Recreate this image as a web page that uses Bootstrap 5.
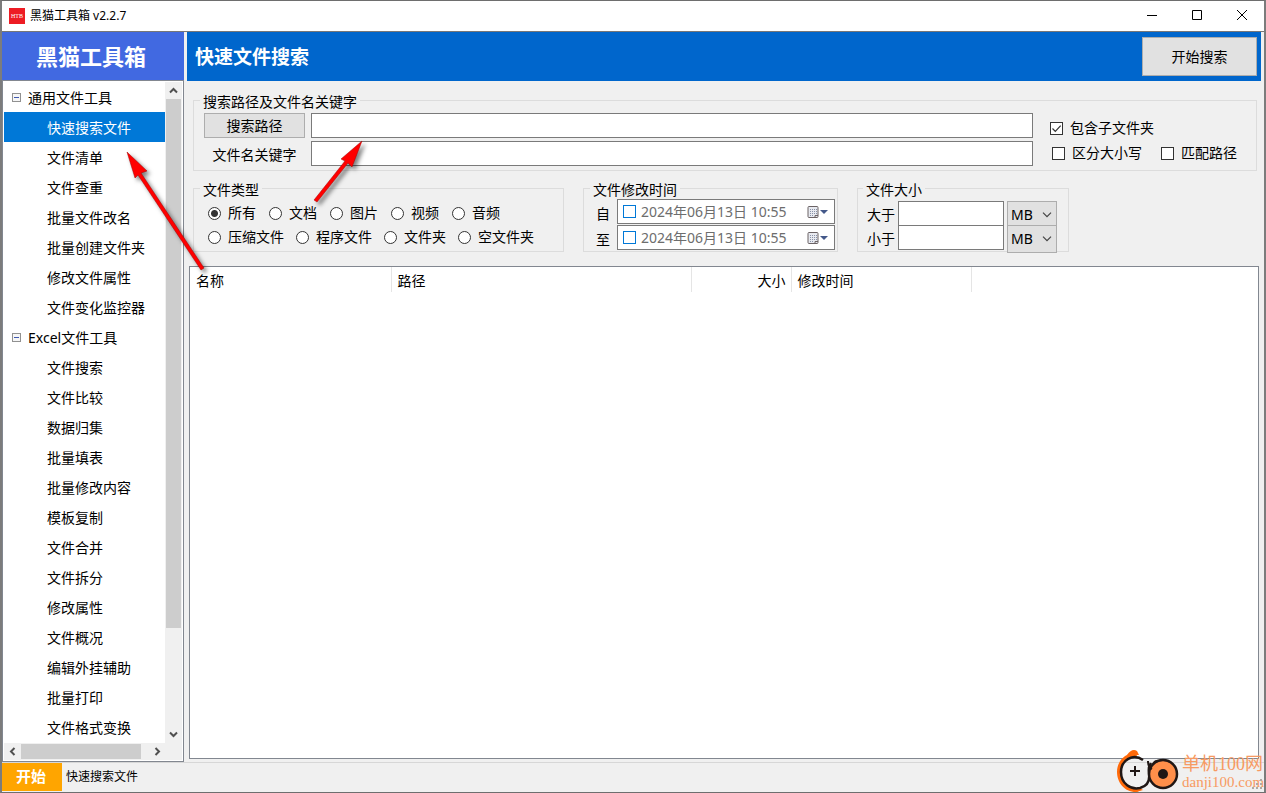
<!DOCTYPE html>
<html lang="zh-CN">
<head>
<meta charset="utf-8">
<meta name="viewport" content="width=device-width, initial-scale=1">
<title>黑猫工具箱 v2.2.7</title>
<link href="https://cdn.jsdelivr.net/npm/bootstrap@5.3.0/dist/css/bootstrap.min.css" rel="stylesheet">
<style>
  body { font: 14px/20px "Noto Sans", "Noto Sans CJK SC", sans-serif; color: #000; background: #f0f0f0; }
  .app { border: 1px solid #6e6e6e; border-left: 2px solid #7c7c7c; border-right: 2px solid #7c7c7c; }
  .shrinkable { min-width: 0; min-height: 0; }
  .titlebar { height: 31px; background: #fff; border-bottom: 1px solid #777; font-size: 12px; padding-left: 7px; }
  .app-logo { width: 16px; height: 16px; background: #ed1c24; margin-right: 5px; }
  .winbtn { width: 45px; height: 30px; border: 0; background: none; padding: 0 0 2px; display: flex; align-items: center; justify-content: center; }
  .sidebar { width: 182px; }
  .brand { height: 48px; background: #4169e1; color: #fff; font-size: 22px; font-weight: 700; padding: 0 4px 0 0; }
  .tree-frame { border: 1px solid #828790; background: #fff; padding: 1px; }
  .tree-view { overflow: hidden; }
  .tree-view a { display: flex; align-items: center; height: 30px; color: #000; text-decoration: none; padding: 1px 0 0 43px; white-space: nowrap; }
  .tree-view a.group-node { padding-left: 8px; gap: 7px; }
  .tree-view a.active { background: #0078d7; color: #fff; }
  .vbar { width: 17px; background: #f0f0f0; }
  .hbar { height: 17px; background: #f0f0f0; }
  .thumb { background: #cdcdcd; }
  .vbar .thumb { width: 15px; height: 80%; }
  .hbar .thumb { width: 120px; height: 15px; margin-left: 1px; }
  .arrow-btn { width: 16px; height: 17px; border: 0; padding: 0; background: none; display: flex; align-items: center; justify-content: center; flex: none; }
  .content { padding: 0 3px 3px; }
  .page-head { height: 49px; background: #06c; color: #fff; padding: 4px 4px 4px 8px; }
  .page-head h1 { font-size: 19px; line-height: 26px; font-weight: 700; margin: 0; }
  .winform-btn { background: #e1e1e1; border: 1px solid #adadad; color: #000; padding: 0; }
  .start-btn { width: 115px; height: 39px; }
  .groupbox { border: 1px solid #dcdcdc; padding: 0 10px; margin: 0; min-width: 0; }
  .groupbox legend { float: none; width: auto; font-size: 14px; line-height: 20px; margin: 0 0 0 -4px; padding: 4px 3px 0; height: 24px; }
  .box-path { margin: 7px 4px 0 6px; height: 83px; }
  .filters { gap: 19px; margin: 5px 0 0 6px; }
  .filters .groupbox { height: 76px; flex: none; }
  .path-grid { display: grid; grid-template-columns: 101px 1fr; gap: 3px 6px; grid-auto-rows: 25px; padding-top: 1px; }
  .path-grid label { justify-content: center; padding-top: 2px; }
  .field { border: 1px solid #7a7a7a; background: #fff; border-radius: 0; padding: 0 4px; min-width: 0; }
  .options { width: 213px; padding: 6px 0 0 17px; gap: 5px; }
  .options > div { height: 20px; gap: 19px; }
  .options > div + div { padding-left: 2px; }
  label { display: inline-flex; align-items: center; white-space: nowrap; }
  input[type=checkbox], input[type=radio] { appearance: none; width: 13px; height: 13px; border: 1px solid #333; background: #fff center/11px 11px no-repeat; margin: 0 7px 0 0; flex: none; }
  input[type=radio] { border-radius: 50%; }
  input[type=radio]:checked { background-image: radial-gradient(circle, #333 3px, transparent 4px); }
  input[type=checkbox]:checked { background-image: url("data:image/svg+xml,%3Csvg xmlns='http://www.w3.org/2000/svg' viewBox='0 0 11 11'%3E%3Cpath d='M1.5 5.5 4.3 8.3 9.7 2.7' fill='none' stroke='%23333' stroke-width='1.2'/%3E%3C/svg%3E"); }
  .box-type { width: 371px; }
  .box-type .groupbox-body { padding: 1px 0 0 4px; }
  .box-type .groupbox-body > div { height: 24px; gap: 13px; }
  .box-type .groupbox-body > div + div { gap: 12px; }
  .box-time { width: 255px; padding-right: 2px; }
  .box-time .groupbox-body { display: grid; gap: 1px; margin-top: -1px; }
  .box-size { width: 212px; padding-left: 9px; }
  .box-size .groupbox-body { padding-top: 1px; }
  .cap { width: 23px; padding: 4px 0 0 2px; }
  .cap-wide { width: 31px; padding-top: 4px; }
  .datebox { height: 25px; border: 1px solid #7a7a7a; background: #fff; padding-left: 5px; }
  .datebox input[type=checkbox] { margin-right: 5px; border-color: #0078d7; }
  .datebox input[type=text] { border: 0; padding: 0 0 2px; background: none; color: #6d6d6d; width: 160px; height: 22px; }
  .datebox button { border: 0; background: none; padding: 0; display: flex; margin: 0 5px 0 auto; }
  .num { width: 106px; height: 25px; }
  .num-row { height: 24px; }
  .unit { width: 50px; height: 28px; border: 1px solid #adadad; border-radius: 0; color: #000; padding: 0 0 0 3px; margin-left: 3px; appearance: none;
    background: #e1e1e1 url("data:image/svg+xml,%3Csvg xmlns='http://www.w3.org/2000/svg' viewBox='0 0 10 6'%3E%3Cpath d='M1 .7 5 4.7 9 .7' fill='none' stroke='%23444' stroke-width='1.2'/%3E%3C/svg%3E") right 4px center/10px 6px no-repeat; }
  .results { border: 1px solid #828790; background: #fff; margin: 14px 2px 0; }
  .results table { table-layout: fixed; width: 781px; margin: 0; }
  .results th { height: 25px; font-weight: 400; padding: 3px 5px 0 6px; border-right: 1px solid #e5e5e5; }
  .results .col-name { width: 201px; }
  .results .col-path { width: 300px; }
  .results .col-size { width: 100px; }
  .results .col-time { width: 180px; }
  .statusbar { height: 30px; border-top: 1px solid #d7d7d7; font-size: 12px; padding-bottom: 1px; }
  .start-tab { width: 60px; height: 28px; background: #ffa500; color: #fff; border: 0; font-size: 15px; font-weight: 700; padding: 0 2px 2px 0; }
  .pointers { left: 0; top: 0; pointer-events: none; filter: drop-shadow(3px 3px 2px rgba(0,0,0,.5)); }
  .watermark { right: 0; bottom: 0; width: 148px; height: 42px; pointer-events: none; color: #f79a62; font-family: "Liberation Serif", "Noto Sans CJK SC", serif; }
  .watermark strong { font-size: 18px; line-height: 20px; font-weight: 400; }
  .watermark span { font-size: 15px; line-height: 16px; }
  .grip { right: 1px; bottom: 2px; }
</style>
</head>
<body>
<div class="app vh-100 d-flex flex-column position-relative overflow-hidden">
  <header class="titlebar d-flex align-items-center flex-shrink-0">
    <svg class="app-logo" viewBox="0 0 16 16"><text x="8" y="10" font-size="6" fill="#fff" text-anchor="middle" font-family="Liberation Serif, serif">HTB</text></svg>
    <span>黑猫工具箱 v2.2.7</span>
    <div class="ms-auto d-flex">
      <button class="winbtn" aria-label="最小化"><svg width="12" height="12"><path d="M1 6.500h10" stroke="#000"/></svg></button>
      <button class="winbtn" aria-label="最大化"><svg width="12" height="12"><path d="M1.500 1.500h9v9h-9z" fill="none" stroke="#000"/></svg></button>
      <button class="winbtn" aria-label="关闭"><svg width="12" height="12"><path d="M1 1l10 10M11 1L1 11" stroke="#000"/></svg></button>
    </div>
  </header>

  <div class="shrinkable d-flex flex-grow-1">
    <aside class="sidebar d-flex flex-column flex-shrink-0">
      <div class="brand d-flex align-items-center justify-content-center flex-shrink-0">黑猫工具箱</div>
      <div class="tree-frame shrinkable flex-grow-1 d-flex flex-column">
        <div class="shrinkable d-flex flex-grow-1">
          <nav class="tree-view shrinkable flex-grow-1" aria-label="工具">
            <a href="#" class="group-node"><svg width="9" height="9"><rect x=".5" y=".5" width="8" height="8" fill="#f6f6f6" stroke="#919191"/><path d="M2 4.500h5" stroke="#4059b0"/></svg>通用文件工具</a>
            <a href="#" class="active">快速搜索文件</a>
            <a href="#">文件清单</a>
            <a href="#">文件查重</a>
            <a href="#">批量文件改名</a>
            <a href="#">批量创建文件夹</a>
            <a href="#">修改文件属性</a>
            <a href="#">文件变化监控器</a>
            <a href="#" class="group-node"><svg width="9" height="9"><rect x=".5" y=".5" width="8" height="8" fill="#f6f6f6" stroke="#919191"/><path d="M2 4.500h5" stroke="#4059b0"/></svg>Excel文件工具</a>
            <a href="#">文件搜索</a>
            <a href="#">文件比较</a>
            <a href="#">数据归集</a>
            <a href="#">批量填表</a>
            <a href="#">批量修改内容</a>
            <a href="#">模板复制</a>
            <a href="#">文件合并</a>
            <a href="#">文件拆分</a>
            <a href="#">修改属性</a>
            <a href="#">文件概况</a>
            <a href="#">编辑外挂辅助</a>
            <a href="#">批量打印</a>
            <a href="#">文件格式变换</a>
          </nav>
          <div class="vbar d-flex flex-column align-items-center flex-shrink-0">
            <button class="arrow-btn" aria-label="向上"><svg width="9" height="7"><path d="M1 5.500l3.500-3.500L8 5.500" fill="none" stroke="#505050" stroke-width="2"/></svg></button>
            <div class="thumb"></div>
            <button class="arrow-btn mt-auto" aria-label="向下"><svg width="9" height="7"><path d="M1 1.500L4.500 5 8 1.500" fill="none" stroke="#505050" stroke-width="2"/></svg></button>
          </div>
        </div>
        <div class="hbar d-flex align-items-center flex-shrink-0">
          <button class="arrow-btn" aria-label="向左"><svg width="7" height="9"><path d="M5.500 1L2 4.500 5.500 8" fill="none" stroke="#505050" stroke-width="2"/></svg></button>
          <div class="thumb"></div>
          <button class="arrow-btn ms-2" aria-label="向右"><svg width="7" height="9"><path d="M1.500 1L5 4.500 1.500 8" fill="none" stroke="#505050" stroke-width="2"/></svg></button>
        </div>
      </div>
    </aside>

    <main class="content shrinkable flex-grow-1 d-flex flex-column">
      <div class="page-head d-flex align-items-center justify-content-between flex-shrink-0">
        <h1>快速文件搜索</h1>
        <button class="winform-btn start-btn">开始搜索</button>
      </div>

      <fieldset class="groupbox box-path flex-shrink-0">
        <legend>搜索路径及文件名关键字</legend>
        <div class="d-flex">
          <div class="path-grid flex-grow-1">
            <button class="winform-btn" id="pick">搜索路径</button>
            <input class="field" type="text" aria-labelledby="pick">
            <label for="kw">文件名关键字</label>
            <input class="field" type="text" id="kw">
          </div>
          <div class="options d-flex flex-column">
            <div class="d-flex"><label><input type="checkbox" checked>包含子文件夹</label></div>
            <div class="d-flex"><label><input type="checkbox">区分大小写</label><label><input type="checkbox">匹配路径</label></div>
          </div>
        </div>
      </fieldset>

      <div class="filters d-flex flex-shrink-0">
        <fieldset class="groupbox box-type">
          <legend>文件类型</legend>
          <div class="groupbox-body">
            <div class="d-flex">
              <label><input type="radio" name="kind" checked>所有</label>
              <label><input type="radio" name="kind">文档</label>
              <label><input type="radio" name="kind">图片</label>
              <label><input type="radio" name="kind">视频</label>
              <label><input type="radio" name="kind">音频</label>
            </div>
            <div class="d-flex">
              <label><input type="radio" name="kind">压缩文件</label>
              <label><input type="radio" name="kind">程序文件</label>
              <label><input type="radio" name="kind">文件夹</label>
              <label><input type="radio" name="kind">空文件夹</label>
            </div>
          </div>
        </fieldset>

        <fieldset class="groupbox box-time">
          <legend>文件修改时间</legend>
          <div class="groupbox-body">
            <div class="d-flex">
              <label class="cap" for="from">自</label>
              <div class="datebox d-flex align-items-center flex-grow-1">
                <input type="checkbox" aria-label="启用起始时间"><input type="text" id="from" value="2024年06月13日 10:55">
                <button aria-label="选择日期"><svg width="22" height="14"><rect x="1" y="1.500" width="10" height="11" rx="1" fill="#e8eaf0" stroke="#6b6365"/><path d="M3 4.500h7M3 6.500h7M3 8.500h7M3 10.500h4" stroke="#8992a8" stroke-dasharray="1 1"/><path d="M8 12.500v-2h3" fill="none" stroke="#6b6365"/><path d="M13 5h8l-4 4z" fill="#44598a"/></svg></button>
              </div>
            </div>
            <div class="d-flex">
              <label class="cap" for="until">至</label>
              <div class="datebox d-flex align-items-center flex-grow-1">
                <input type="checkbox" aria-label="启用结束时间"><input type="text" id="until" value="2024年06月13日 10:55">
                <button aria-label="选择日期"><svg width="22" height="14"><rect x="1" y="1.500" width="10" height="11" rx="1" fill="#e8eaf0" stroke="#6b6365"/><path d="M3 4.500h7M3 6.500h7M3 8.500h7M3 10.500h4" stroke="#8992a8" stroke-dasharray="1 1"/><path d="M8 12.500v-2h3" fill="none" stroke="#6b6365"/><path d="M13 5h8l-4 4z" fill="#44598a"/></svg></button>
              </div>
            </div>
          </div>
        </fieldset>

        <fieldset class="groupbox box-size">
          <legend>文件大小</legend>
          <div class="groupbox-body">
            <div class="num-row d-flex">
              <label class="cap-wide" for="min">大于</label>
              <input class="field num" type="text" id="min">
              <select class="unit" aria-label="单位"><option>MB</option></select>
            </div>
            <div class="num-row d-flex">
              <label class="cap-wide" for="max">小于</label>
              <input class="field num" type="text" id="max">
              <select class="unit" aria-label="单位"><option>MB</option></select>
            </div>
          </div>
        </fieldset>
      </div>

      <div class="results shrinkable flex-grow-1">
        <table>
          <colgroup><col class="col-name"><col class="col-path"><col class="col-size"><col class="col-time"></colgroup>
          <thead><tr><th scope="col">名称</th><th scope="col">路径</th><th scope="col" class="text-end">大小</th><th scope="col">修改时间</th></tr></thead>
        </table>
      </div>
    </main>
  </div>

  <footer class="statusbar d-flex flex-shrink-0">
    <button class="start-tab">开始</button>
    <span class="ms-1 align-self-center">快速搜索文件</span>
  </footer>

  <svg class="pointers position-absolute" width="380" height="280" viewBox="2 1 380 280">
    <path d="M127 152l20 19-6 2 63 95-3 2-63-95-3 3z" fill="#f00" stroke="#a00000" stroke-width=".5"/>
    <path d="M362 141l-10 26-4-4-31 39-3-2 31-39-4-2z" fill="#f00" stroke="#a00000" stroke-width=".5"/>
  </svg>

  <div class="watermark position-absolute d-flex">
    <svg width="66" height="44" viewBox="0 0 66 44" class="flex-shrink-0">
      <path d="M20 3C8 3 1 12 1 22s7 20 19 20l7-2C12 39 5 32 5 22 5 12 11 6 21 6z" fill="#ff6a0a"/>
      <path d="M11 5q5-7 10-4l2 4zM17 38l10 1-8 4z" fill="#ff6a0a"/>
      <path d="M27 10C17 3 5 10 5 22s10 18 19 16c8-2 10-8 9-15s1-8 2-10" fill="none" stroke="#201715" stroke-width="2.500"/>
      <path d="M14 21h10M19 16v10" stroke="#201715" stroke-width="2"/>
      <circle cx="47" cy="24" r="14" fill="#ff8f4a" stroke="#201715" stroke-width="2.500"/>
      <path d="M32 11q0 6 4 8M37 15q1-4 4-4" fill="none" stroke="#201715" stroke-width="2"/>
      <circle cx="47" cy="24" r="5" fill="#201715"/>
    </svg>
    <div class="d-flex flex-column pt-1"><strong>单机100网</strong><span>danji100.com</span></div>
  </div>
  <svg class="grip position-absolute" width="12" height="12" viewBox="0 0 12 12"><path d="M9 1h2v2H9zM5 5h2v2H5zM9 5h2v2H9zM1 9h2v2H1zM5 9h2v2H5zM9 9h2v2H9z" fill="#b0a8a4"/></svg>
</div>
<script src="https://cdn.jsdelivr.net/npm/bootstrap@5.3.0/dist/js/bootstrap.bundle.min.js"></script>
</body>
</html>
